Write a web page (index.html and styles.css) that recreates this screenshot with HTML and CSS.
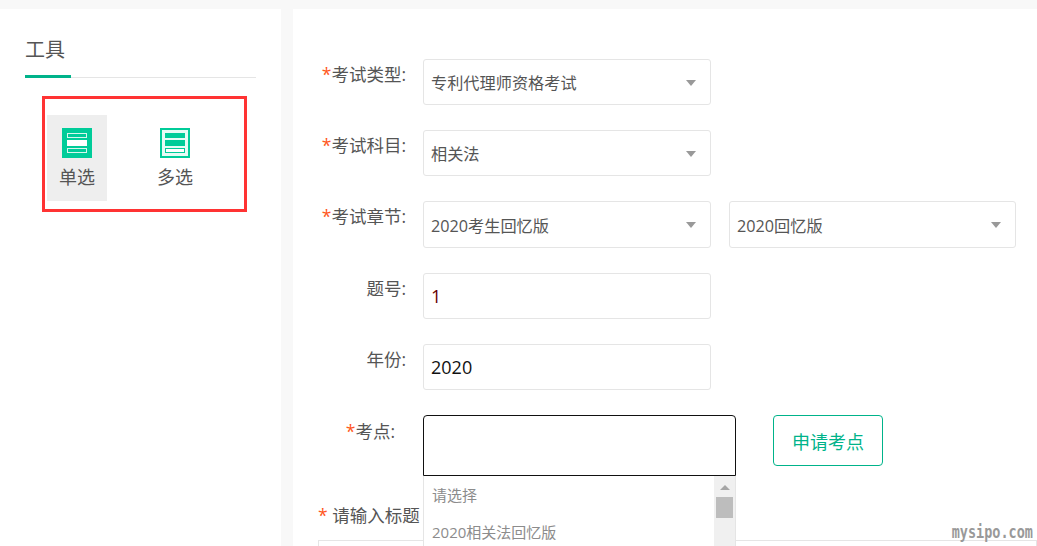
FILE: index.html
```html
<!DOCTYPE html>
<html lang="zh-CN">
<head>
  <meta charset="UTF-8" />
  <title>工具</title>
  <link rel="stylesheet" href="styles.css">
</head>
<body>
  <div class="page">
    <!-- Tools sidebar -->
    <aside class="sidebar">
      <div class="tool-head"><span class="tool-title">工具</span></div>
      <div class="tool-box">
        <div class="tool active">
          <svg class="tool-icon" viewBox="0 0 30 30">
            <rect width="30" height="30" fill="#00cc99"/>
            <rect x="5.5" y="5.5" width="19" height="4" fill="#00cc99" stroke="#d8f7ee"/>
            <rect x="5" y="12" width="20" height="6" fill="#fff"/>
            <rect x="5.5" y="20.5" width="19" height="4" fill="#00cc99" stroke="#d8f7ee"/>
          </svg>
          <span>单选</span>
        </div>
        <div class="tool">
          <svg class="tool-icon" viewBox="0 0 30 30">
            <rect width="30" height="30" fill="#00cc99"/>
            <rect x="2" y="2" width="26" height="26" fill="#e6fbf5"/>
            <rect x="5" y="5" width="20" height="5" fill="#00cc99"/>
            <rect x="5" y="12" width="20" height="6" fill="#00cc99"/>
            <rect x="5.5" y="20.5" width="19" height="4" fill="#fff" stroke="#00cc99"/>
          </svg>
          <span>多选</span>
        </div>
      </div>
    </aside>

    <!-- Question form -->
    <main class="content">
      <div class="row">
        <label class="label"><i>*</i>考试类型:</label>
        <div class="select">专利代理师资格考试</div>
      </div>
      <div class="row">
        <label class="label"><i>*</i>考试科目:</label>
        <div class="select">相关法</div>
      </div>
      <div class="row tall">
        <label class="label"><i>*</i>考试章节:</label>
        <div class="select">2020考生回忆版</div>
        <div class="select second">2020回忆版</div>
      </div>
      <div class="row">
        <label class="label">题号:</label>
        <div class="input num">1</div>
      </div>
      <div class="row">
        <label class="label">年份:</label>
        <div class="input year">2020</div>
      </div>
      <div class="row point-row">
        <label class="label point-label"><i>*</i>考点:</label>
        <div class="point-wrap">
          <div class="point-input"></div>
          <div class="dropdown">
            <div class="options">
              <div class="option">请选择</div>
              <div class="option">2020相关法回忆版</div>
            </div>
            <div class="scrollbar">
              <div class="scroll-up"></div>
              <div class="scroll-thumb"></div>
            </div>
          </div>
        </div>
        <button class="apply-btn">申请考点</button>
      </div>
      <div class="title-label"><i>*</i> 请输入标题</div>
      <div class="editor"></div>
    </main>
  </div>
  <div class="watermark">mysipo.com</div>
</body>
</html>
```

FILE: styles.css
```css
* {
  margin: 0;
  padding: 0;
  box-sizing: border-box;
}

html, body {
  height: 546px;
  overflow: hidden;
}

body {
  position: relative;
  background-color: #f8f8f8;
  color: #555;
  font-family: "Open Sans", "Noto Sans CJK SC", sans-serif;
  font-size: 16.2px;
}

.page {
  display: flex;
  gap: 12px;
  padding-top: 9px;
  height: 546px;
}

/* Sidebar */
.sidebar {
  width: 281px;
  background-color: #fff;
  padding: 24px 25px 0;
}

.tool-head {
  width: 231px;
  height: 45px;
  border-bottom: 1px solid #e5e5e5;
}

.tool-title {
  display: inline-block;
  width: 46px;
  height: 45px;
  line-height: 34px;
  font-size: 20px;
  border-bottom: 3px solid #00b38a;
}

.tool-box {
  display: flex;
  gap: 38px;
  width: 205px;
  height: 116px;
  margin: 18px 0 0 17px;
  padding: 16px 2px 0;
  border: 3px solid #ff3333;
}

.tool {
  display: flex;
  flex-direction: column;
  align-items: center;
  width: 60px;
  height: 86px;
  padding-top: 13px;
}

.tool.active {
  background-color: #eee;
}

.tool span {
  margin-top: 6px;
  line-height: 26px;
  font-size: 18px;
}

.tool-icon {
  display: block;
  width: 30px;
  height: 30px;
}

/* Form */
.content {
  flex: 1;
  background-color: #fff;
  padding: 50px 0 0 25px;
  overflow: hidden;
}

.row {
  display: flex;
  height: 46px;
  margin-bottom: 25px;
}

.row.tall {
  height: 47px;
}

.label {
  width: 105px;
  padding: 0 17px 0 0;
  line-height: 30px;
  font-size: 17.5px;
  text-align: right;
  white-space: nowrap;
}

.point-label {
  padding-right: 28px;
  padding-top: 1px;
}

.label i,
.title-label i {
  color: #ff5722;
  font-style: normal;
}

.select,
.input {
  position: relative;
  width: 288px;
  height: 46px;
  border: 1px solid #e5e5e5;
  border-radius: 3px;
  padding: 0 7px;
  line-height: 46px;
}

.tall .select {
  height: 47px;
  line-height: 48px;
}

.select::after {
  content: "";
  position: absolute;
  top: 20px;
  right: 14px;
  border-top: 6px solid #999;
  border-left: 5px solid transparent;
  border-right: 5px solid transparent;
}

.select.second {
  width: 287px;
  margin-left: 18px;
}

.input {
  font-size: 18px;
  line-height: 44px;
}

.num {
  color: #600;
}

.year {
  color: #111;
}

.point-row {
  height: 61px;
  margin-bottom: 26px;
}

.point-wrap {
  position: relative;
  width: 313px;
}

.point-input {
  height: 61px;
  border: 1px solid #111;
  border-radius: 4px 4px 0 0;
}

.dropdown {
  position: absolute;
  top: 61px;
  left: 0;
  z-index: 5;
  display: flex;
  width: 313px;
  height: 70px;
  overflow: hidden;
  background-color: #fff;
  border-left: 1px solid #e5e5e5;
  border-right: 1px solid #e5e5e5;
}

.options {
  flex: 1;
  padding: 1px 0 0 8px;
  font-size: 15px;
  color: #8c8c8c;
}

.option {
  height: 37px;
  line-height: 37px;
}

.scrollbar {
  width: 21px;
  background-color: #f0f0f0;
  padding: 0 2px;
}

.scroll-up {
  width: 0;
  margin: 9px auto 7px;
  border-bottom: 5px solid #a5a5a5;
  border-left: 5px solid transparent;
  border-right: 5px solid transparent;
}

.scroll-thumb {
  width: 17px;
  height: 21px;
  background-color: #bdbdbd;
}

.apply-btn {
  width: 110px;
  height: 51px;
  margin-left: 37px;
  background-color: #fff;
  border: 1px solid #00b38a;
  border-radius: 4px;
  color: #00b38a;
  font-family: inherit;
  font-size: 18px;
}

.title-label {
  line-height: 26px;
  font-size: 17.5px;
}

.editor {
  height: 6px;
  margin-top: 12px;
  border: 1px solid #e5e5e5;
  border-bottom: none;
}

.watermark {
  position: absolute;
  right: 4px;
  bottom: 6px;
  font-family: "DejaVu Sans Mono", monospace;
  font-weight: bold;
  font-size: 13.5px;
  line-height: 16px;
  color: #999;
  transform: scaleY(1.25);
}
```
